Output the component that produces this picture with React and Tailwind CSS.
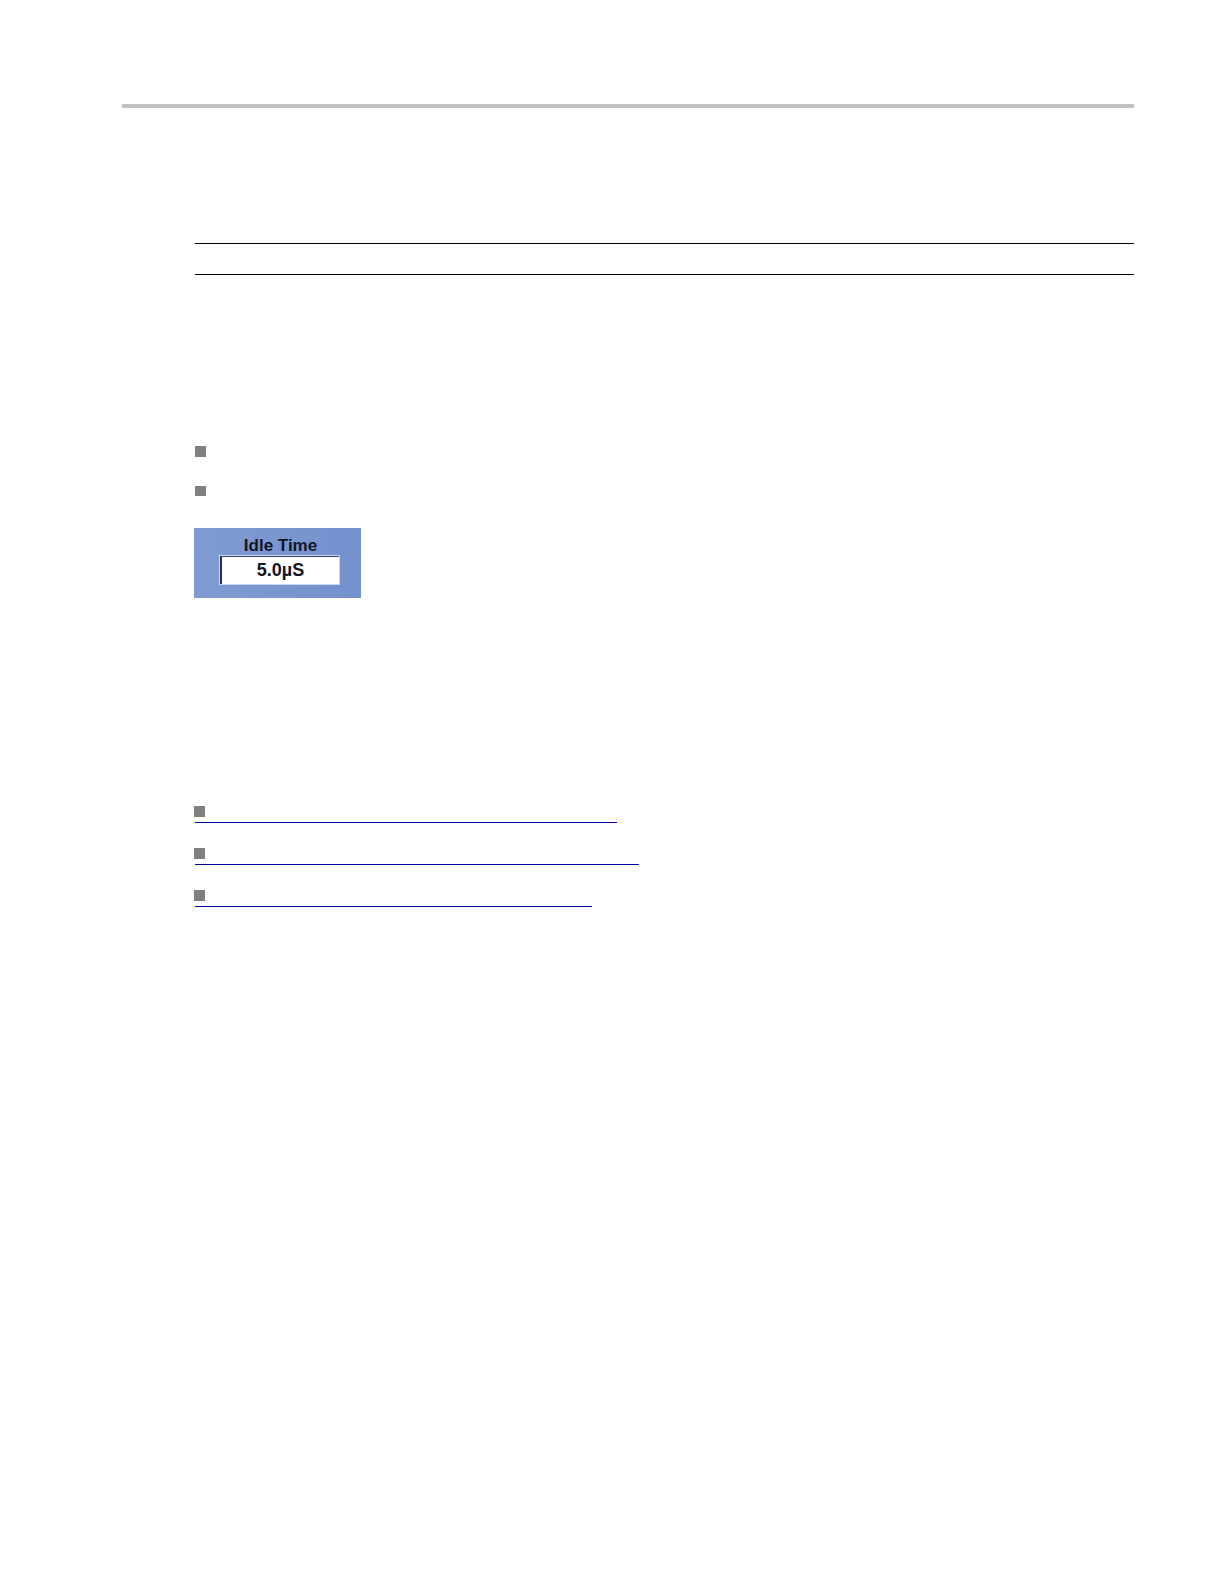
import React, { useState } from 'react';

const notes = [
  { id: 'note-1', size: 'h-[11px]' },
  { id: 'note-2', size: 'h-[10px]' },
];

const links = [
  { id: 'related-1', width: 'w-[422px]' },
  { id: 'related-2', width: 'w-[444px]' },
  { id: 'related-3', width: 'w-[397px]' },
];

const IdleTimePanel = () => {
  const [idleTime, setIdleTime] = useState('5.0µS');

  return (
    <div className="mt-8 flex h-[70px] w-[167px] flex-col bg-linear-to-r from-[#809bd3] to-[#7391cd] pt-2 pr-[21px] pl-[25px] text-[#14161f]">
      <label htmlFor="idle-time" className="h-[19px] pl-0.5 text-center text-[17px] leading-5 font-bold">
        Idle Time
      </label>
      <div className="h-[30px] border border-[#c9d8f2]">
        <input
          id="idle-time"
          type="text"
          value={idleTime}
          onChange={(e) => setIdleTime(e.target.value)}
          className="block h-7 w-full border-t border-l-2 border-t-[#3c4152] border-l-[#2a2d38] bg-white text-center text-[18px] leading-6 font-bold outline-none"
        />
      </div>
    </div>
  );
};

const App = () => {
  return (
    <div className="min-h-screen bg-white pt-[104px] pr-[90px] pl-[122px] font-['Liberation_Sans',Arial,sans-serif]">
      <header className="h-1 bg-[#c0c0c0]" />

      <main className="pl-[72px]">
        {/* title band */}
        <div className="mt-[135px] ml-px h-8 border-y border-black" />

        <ul className="mt-[171px] ml-px flex flex-col gap-[29px]">
          {notes.map((note) => (
            <li key={note.id} className={`w-[11px] bg-[#808080] ${note.size}`} />
          ))}
        </ul>

        <IdleTimePanel />

        <ul className="mt-52 flex flex-col gap-[25px]">
          {links.map((link) => (
            <li key={link.id}>
              <div className="size-[11px] bg-[#808080]" />
              <a
                href={`#${link.id}`}
                className={`ml-px block h-[6px] max-w-full border-b border-[#00009c] ${link.width}`}
              />
            </li>
          ))}
        </ul>
      </main>
    </div>
  );
};

export default App;
